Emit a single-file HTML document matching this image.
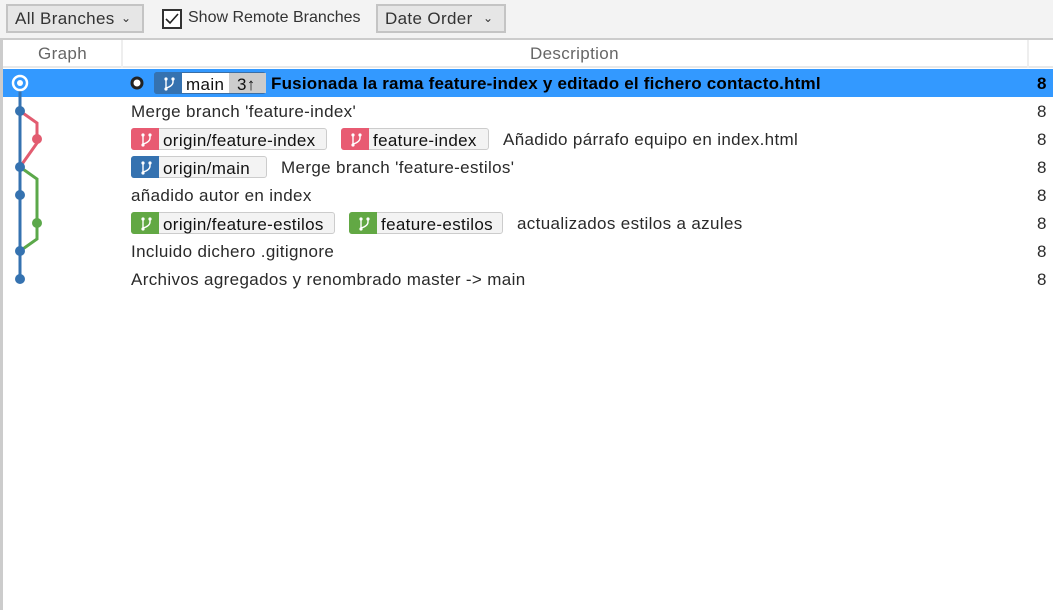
<!DOCTYPE html>
<html><head><meta charset="utf-8"><style>
*{margin:0;padding:0;box-sizing:border-box}
body{width:1053px;height:610px;overflow:hidden;background:#fff;font-family:"Segoe UI","Liberation Sans",sans-serif;font-size:17px;letter-spacing:0.35px;color:#2a2a2a;position:relative}
.tb{position:absolute;left:0;top:0;width:1053px;height:38px;background:#f3f3f3}
.btn{position:absolute;top:4px;height:29px;border:2px solid #c4c4c4;background:#e6e6e6;padding:0 0 0 7px;line-height:26px;color:#333}
.hdr{position:absolute;left:0;top:38px;width:1053px;height:30px;border-top:2px solid #ccc;border-bottom:2px solid #e8e8e8;color:#666;line-height:28px}
.a{position:absolute;white-space:nowrap}
.row{position:absolute;left:131px;height:28px;line-height:30px;white-space:nowrap}
.tag{position:absolute;height:22px;border:1px solid #ccc;border-radius:3px;background:#f3f3f3;line-height:23px;padding-left:31px;color:#111}
.tag i{position:absolute;left:-1px;top:-1px;width:28px;height:22px;border-radius:3px 0 0 3px}
.tag svg{position:absolute;left:7px;top:3px}
</style></head><body>
<div class="tb"></div>
<div class="btn" style="left:6px;width:138px">All Branches<span class="a" style="left:113px;top:-1px;font-size:12px">&#8964;</span></div>
<div class="a" style="left:162px;top:9px;width:20px;height:20px;border:2px solid #333;background:#fff"><svg width="16" height="16" style="position:absolute;left:0;top:0"><path d="M2 8 L6 12 L14 3" stroke="#222" stroke-width="1.6" fill="none"/></svg></div>
<div class="a" style="left:188px;top:9px;color:#333;font-size:16px;letter-spacing:0">Show Remote Branches</div>
<div class="btn" style="left:376px;width:130px">Date Order<span class="a" style="left:105px;top:-1px;font-size:12px">&#8964;</span></div>
<div class="hdr"><span class="a" style="left:38px">Graph</span><span class="a" style="left:530px">Description</span>
<div class="a" style="left:121px;top:0;width:2px;height:28px;background:#eee"></div>
<div class="a" style="left:1027px;top:0;width:2px;height:28px;background:#eee"></div></div>
<div class="a" style="left:0;top:38px;width:3px;height:572px;background:#ccc"></div>
<div class="a" style="left:3px;top:69px;width:1050px;height:28px;background:#3399ff"></div>
<svg class="a" style="left:0;top:68px" width="60" height="230">
<path d="M20 15 V211" stroke="#3572b0" stroke-width="3" fill="none"/>
<path d="M20 43 L37 55 V59 V75 L20 99" stroke="#e25c70" stroke-width="3" fill="none"/>
<path d="M20 99 L37 111 V155 V171 L20 183" stroke="#5ba84a" stroke-width="3" fill="none"/>
<circle cx="20" cy="15" r="7" fill="#3399ff" stroke="#fff" stroke-width="2.5"/><circle cx="20" cy="15" r="3" fill="#fff"/>
<g fill="#3572b0"><circle cx="20" cy="43" r="5"/><circle cx="20" cy="99" r="5"/><circle cx="20" cy="127" r="5"/><circle cx="20" cy="183" r="5"/><circle cx="20" cy="211" r="5"/></g>
<circle cx="37" cy="71" r="5" fill="#e25c70"/><circle cx="37" cy="155" r="5" fill="#5ba84a"/>
</svg>
<svg class="a" style="left:130px;top:76px" width="14" height="14"><circle cx="7" cy="7" r="5" fill="#fff" stroke="#222" stroke-width="3"/></svg>
<div class="tag" style="left:154px;top:72px;width:112px;background:#fff;border-color:#3a6ea5"><i style="background:#3572b0"></i><svg width="14" height="16"><path d="M4 3V13M11 3V6Q11 10 4 12" stroke="#fff" stroke-width="1.4" fill="none"/><circle cx="4" cy="3" r="1.6" fill="#fff"/><circle cx="11" cy="3" r="1.6" fill="#fff"/><circle cx="4" cy="13" r="1.6" fill="#fff"/></svg>main<span class="a" style="left:74px;top:0;width:37px;height:20px;background:#ccc;padding-left:8px">3↑</span></div>
<div class="row" style="left:271px;top:69px;font-weight:bold;color:#000;letter-spacing:0.2px">Fusionada la rama feature-index y editado el fichero contacto.html</div>
<div class="row" style="left:1037px;top:69px;font-weight:bold;color:#000">8</div>
<div class="row" style="top:97px">Merge branch 'feature-index'</div>
<div class="tag" style="left:131px;top:128px;width:196px"><i style="background:#e85b72"></i><svg width="14" height="16"><path d="M4 3V13M11 3V6Q11 10 4 12" stroke="#fff" stroke-width="1.4" fill="none"/><circle cx="4" cy="3" r="1.6" fill="#fff"/><circle cx="11" cy="3" r="1.6" fill="#fff"/><circle cx="4" cy="13" r="1.6" fill="#fff"/></svg>origin/feature-index</div>
<div class="tag" style="left:341px;top:128px;width:148px"><i style="background:#e85b72"></i><svg width="14" height="16"><path d="M4 3V13M11 3V6Q11 10 4 12" stroke="#fff" stroke-width="1.4" fill="none"/><circle cx="4" cy="3" r="1.6" fill="#fff"/><circle cx="11" cy="3" r="1.6" fill="#fff"/><circle cx="4" cy="13" r="1.6" fill="#fff"/></svg>feature-index</div>
<div class="row" style="left:503px;top:125px">Añadido párrafo equipo en index.html</div>
<div class="tag" style="left:131px;top:156px;width:136px"><i style="background:#3572b0"></i><svg width="14" height="16"><path d="M4 3V13M11 3V6Q11 10 4 12" stroke="#fff" stroke-width="1.4" fill="none"/><circle cx="4" cy="3" r="1.6" fill="#fff"/><circle cx="11" cy="3" r="1.6" fill="#fff"/><circle cx="4" cy="13" r="1.6" fill="#fff"/></svg>origin/main</div>
<div class="row" style="left:281px;top:153px">Merge branch 'feature-estilos'</div>
<div class="row" style="top:181px">añadido autor en index</div>
<div class="tag" style="left:131px;top:212px;width:204px"><i style="background:#62a844"></i><svg width="14" height="16"><path d="M4 3V13M11 3V6Q11 10 4 12" stroke="#fff" stroke-width="1.4" fill="none"/><circle cx="4" cy="3" r="1.6" fill="#fff"/><circle cx="11" cy="3" r="1.6" fill="#fff"/><circle cx="4" cy="13" r="1.6" fill="#fff"/></svg>origin/feature-estilos</div>
<div class="tag" style="left:349px;top:212px;width:154px"><i style="background:#62a844"></i><svg width="14" height="16"><path d="M4 3V13M11 3V6Q11 10 4 12" stroke="#fff" stroke-width="1.4" fill="none"/><circle cx="4" cy="3" r="1.6" fill="#fff"/><circle cx="11" cy="3" r="1.6" fill="#fff"/><circle cx="4" cy="13" r="1.6" fill="#fff"/></svg>feature-estilos</div>
<div class="row" style="left:517px;top:209px">actualizados estilos a azules</div>
<div class="row" style="top:237px">Incluido dichero .gitignore</div>
<div class="row" style="top:265px">Archivos agregados y renombrado master -&gt; main</div>
<div class="row" style="left:1037px;top:97px">8</div><div class="row" style="left:1037px;top:125px">8</div><div class="row" style="left:1037px;top:153px">8</div><div class="row" style="left:1037px;top:181px">8</div><div class="row" style="left:1037px;top:209px">8</div><div class="row" style="left:1037px;top:237px">8</div><div class="row" style="left:1037px;top:265px">8</div>
</body></html>
